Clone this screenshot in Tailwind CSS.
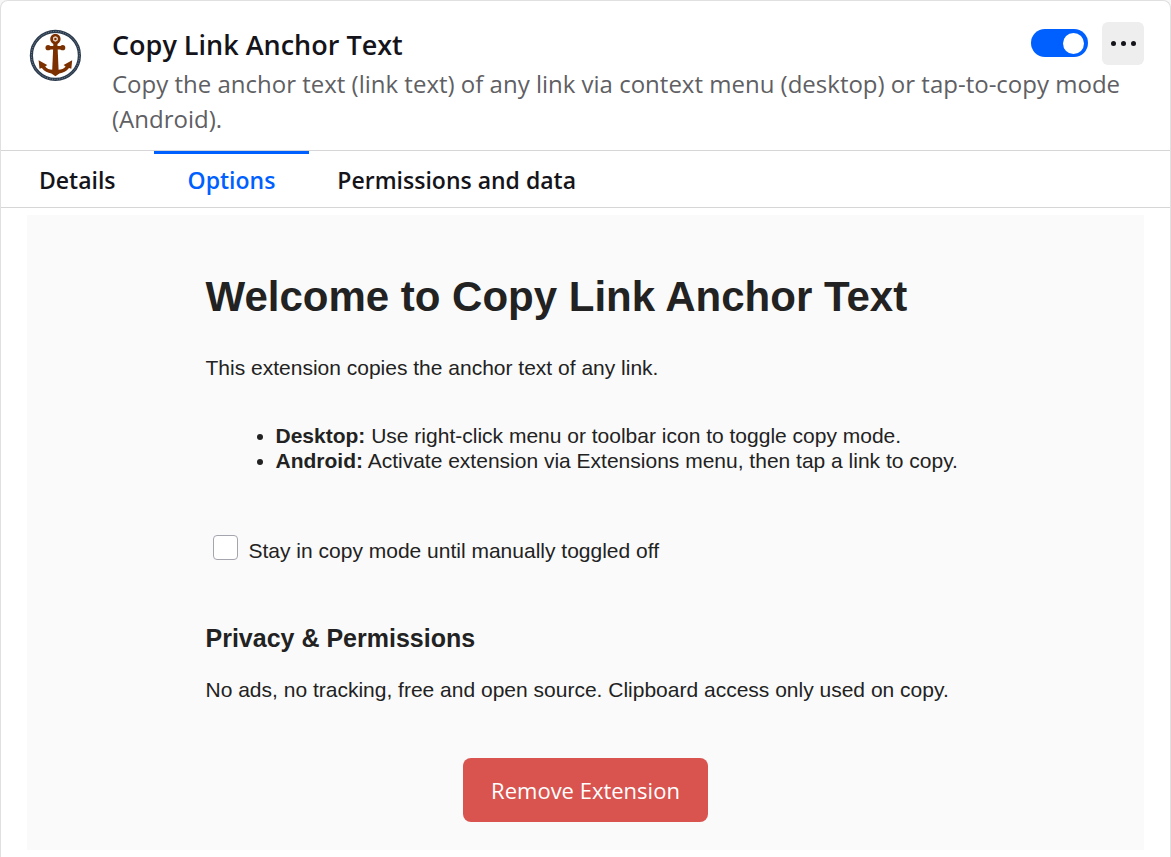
<!DOCTYPE html>
<html lang="en">
<head>
<meta charset="utf-8">
<meta name="viewport" content="width=device-width, initial-scale=1">
<title>Copy Link Anchor Text</title>
<script src="https://cdn.jsdelivr.net/npm/@tailwindcss/browser@4"></script>
</head>
<body class="bg-[#f7f7f8] text-[#15141a] font-['Open_Sans','Noto_Sans',sans-serif]">
<main class="min-h-screen rounded-t-lg border border-b-0 border-[#e0e0e1] bg-white pb-1.5">
  <header class="flex items-start pt-5 pr-[26px] pb-3.5 pl-[27px]">
    <svg class="mt-[7px] size-[54px] shrink-0" viewBox="0 0 54 54" fill="none" aria-hidden="true">
      <circle cx="27.400" cy="27.400" r="24" stroke="#2b3a4c" stroke-width="3.200"/>
      <circle cx="27.400" cy="27.400" r="24" stroke="#8492a0" stroke-width="1" stroke-dasharray="1 1.500"/>
      <circle cx="27.400" cy="11" r="3.800" stroke="#7c3000" stroke-width="2.800"/>
      <circle cx="27.400" cy="11" r="2" stroke="#e3cdbd" stroke-width="1"/>
      <circle cx="27.400" cy="11" r="1.300" fill="#7c3000"/>
      <path d="M25.400 15h4l1.200 27h-6.400z" fill="#7c3000"/>
      <path d="M20 19.700h15" stroke="#7c3000" stroke-width="3.400" stroke-linecap="round"/>
      <circle cx="20.100" cy="19.700" r="2.600" fill="#7c3000"/>
      <circle cx="34.700" cy="19.700" r="2.600" fill="#7c3000"/>
      <path d="M10.600 32.200l8.600 4.800-2 1.400c1.800 2.300 4.200 3.300 7.200 3.300h6c3 0 5.400-1 7.200-3.300l-2-1.400 8.600-4.800-.9 8.600-2.300-.8c-2.600 3.400-5.800 4.800-9.600 5.500l-4 2.700-4-2.700c-3.800-.7-7-2.100-9.600-5.500l-2.300.8z" fill="#7c3000"/>
    </svg>
    <div class="ml-[30px] min-w-0 flex-1">
      <div class="flex items-start">
        <h1 class="mt-1 flex-1 text-[27px] leading-[40px] font-semibold">Copy Link Anchor Text</h1>
        <button type="button" role="switch" aria-checked="true" aria-label="Enable extension" class="mt-2 flex h-7 w-[57px] items-center justify-end rounded-full bg-[#0060ff] pr-1"><span class="size-[21px] rounded-full bg-white"></span></button>
        <button type="button" aria-label="More options" class="mt-px ml-[14px] flex h-[43px] w-[42px] items-center justify-center gap-[5px] rounded-md bg-[#eeeeee]"><span class="size-[5px] rounded-full bg-[#15141a]"></span><span class="size-[5px] rounded-full bg-[#15141a]"></span><span class="size-[5px] rounded-full bg-[#15141a]"></span></button>
      </div>
      <p class="mt-px text-2xl leading-[35px] text-[#5f5f64]">Copy the anchor text (link text) of any link via context menu (desktop) or tap-to-copy mode (Android).</p>
    </div>
  </header>
  <nav class="flex h-[58px] items-stretch border-y border-[#d6d6d9] text-[23px] font-semibold">
    <button type="button" class="border-t-3 border-transparent px-[38px]">Details</button>
    <button type="button" aria-current="page" class="border-t-3 border-[#0060ff] px-[34px] text-[#0060ff]">Options</button>
    <button type="button" class="border-t-3 border-transparent px-7">Permissions and data</button>
  </nav>
  <section class="mx-[26px] mt-[7px] bg-[#fafafa] px-6 pt-14 pb-7 font-['Liberation_Sans',Arial,sans-serif] text-[21px] leading-[25px] text-[#222222]">
    <div class="mx-auto max-w-[760px]">
      <h2 class="text-[42px] leading-[52px] font-bold">Welcome to Copy Link Anchor Text</h2>
      <p class="mt-8">This extension copies the anchor text of any link.</p>
      <ul class="mt-[43px] list-disc pl-[70px]">
        <li><strong>Desktop:</strong> Use right-click menu or toolbar icon to toggle copy mode.</li>
        <li><strong>Android:</strong> Activate extension via Extensions menu, then tap a link to copy.</li>
      </ul>
      <label class="mt-[62px] flex items-start pl-[7px]">
        <input type="checkbox" class="size-[25px] appearance-none rounded-sm border border-[#a5a5b0] bg-white">
        <span class="mt-[3px] ml-[11px]">Stay in copy mode until manually toggled off</span>
      </label>
      <h3 class="mt-[60px] text-[25px] leading-[30px] font-bold">Privacy &amp; Permissions</h3>
      <p class="mt-6">No ads, no tracking, free and open source. Clipboard access only used on copy.</p>
      <div class="mt-14 flex justify-center">
        <button type="button" class="h-16 rounded-lg bg-[#d9534f] px-7 font-['Open_Sans','Noto_Sans',sans-serif] text-[22px] text-white">Remove Extension</button>
      </div>
    </div>
  </section>
</main>
</body>
</html>
